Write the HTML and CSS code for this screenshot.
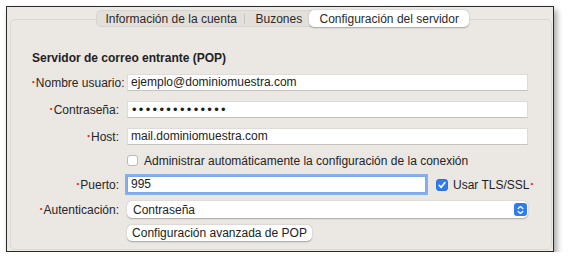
FILE: index.html
```html
<!DOCTYPE html>
<html lang="es">
<head>
<meta charset="utf-8">
<link rel="stylesheet" href="styles.css">
</head>
<body>
<div class="frame">
  <div class="tabs">
    <div class="tab">Información de la cuenta</div>
    <div class="sep"></div>
    <div class="tab tab-mid">Buzones</div>
    <div class="tab tab-sel">Configuración del servidor</div>
  </div>
  <div class="box">
    <div class="title">Servidor de correo entrante (POP)</div>
    <div class="form">
      <div class="row r1">
        <label class="lbl"><span class="req">•</span>Nombre usuario:</label>
        <div class="field">ejemplo@dominiomuestra.com</div>
      </div>
      <div class="row r2">
        <label class="lbl"><span class="req">•</span>Contraseña:</label>
        <div class="field pw">••••••••••••••</div>
      </div>
      <div class="row r2">
        <label class="lbl"><span class="req">•</span>Host:</label>
        <div class="field">mail.dominiomuestra.com</div>
      </div>
      <div class="row r4">
        <span class="lbl"></span>
        <div class="check-line"><span class="cb"></span><span>Administrar automáticamente la configuración de la conexión</span></div>
      </div>
      <div class="row r4">
        <label class="lbl"><span class="req">•</span>Puerto:</label>
        <div class="port-line">
          <div class="field port">995</div>
          <span class="cb cb-on"><svg viewBox="0 0 12 12" width="12" height="12"><path d="M2.6 6.3 L5 8.8 L9.6 3" fill="none" stroke="#fff" stroke-width="1.9" stroke-linecap="round" stroke-linejoin="round"/></svg></span>
          <span class="tls">Usar TLS/SSL<span class="req req-after">•</span></span>
        </div>
      </div>
      <div class="row r6">
        <label class="lbl"><span class="req">•</span>Autenticación:</label>
        <div class="popup"><span>Contraseña</span><span class="stepper"><svg viewBox="0 0 13 12" width="13" height="12"><path d="M4.2 4.6 L6.5 2.6 L8.8 4.6 M4.2 7.4 L6.5 9.4 L8.8 7.4" fill="none" stroke="#fff" stroke-width="1.3" stroke-linecap="round" stroke-linejoin="round"/></svg></span></div>
      </div>
      <div class="row r7">
        <span class="lbl"></span>
        <div><button class="btn">Configuración avanzada de POP</button></div>
      </div>
    </div>
  </div>
</div>
</body>
</html>
```
FILE: styles.css
```css
* { box-sizing: border-box; }
html, body { margin: 0; padding: 0; background: #fff; }
body {
  font-family: "Liberation Sans", Arial, sans-serif;
  font-size: 12px;
  color: #242424;
  padding: 6px 0 0 6px;
}
.frame {
  width: 548px;
  height: 246px;
  border: 1px solid #2a2a2a;
  background: #ece8e4;
  padding: 3px 1px 1px 3px;
  box-shadow: 3px 4px 6px rgba(0,0,0,0.35);
}
.tabs {
  position: relative;
  z-index: 1;
  display: flex;
  align-items: center;
  width: 373px;
  height: 17px;
  margin: 0 auto -8px auto;
  background: #e3dfdb;
  border: 1px solid #d8d4d0;
  border-radius: 5px;
  transform: translateX(1px);
}
.tab {
  height: 100%;
  display: flex;
  align-items: center;
  padding: 0 9px;
  color: #2a2a2a;
  white-space: nowrap;
}
.tab:first-child { padding-left: 9px; width: 147px; }
.sep { width: 1px; height: 10px; background: #c8c4c0; }
.tab-mid { padding-left: 11px; width: 64px; }
.tab-sel {
  flex: 1;
  height: 17px;
  margin: -1px -1px -1px 0;
  background: #fff;
  border-radius: 5px;
  box-shadow: 0 0.5px 1.5px rgba(0,0,0,0.3);
  padding-left: 11px;
}
.box {
  width: 542px;
  height: 231px;
  background: #ebe7e3;
  border: 1px solid #dcd8d4;
  border-radius: 5px;
  padding: 31px 23px 0 21px;
}
.title {
  font-weight: bold;
  line-height: 15px;
  height: 15px;
  color: #222;
}
.form { display: flex; flex-direction: column; }
.row {
  display: grid;
  grid-template-columns: 87px 1fr;
  column-gap: 8px;
  align-items: center;
  height: 17px;
}
.r1 { margin-top: 8px; }
.r2 { margin-top: 10px; }
.r4 { margin-top: 7px; }
.r6 { margin-top: 8px; }
.r7 { margin-top: 7px; height: 16px; }
.lbl {
  text-align: right;
  white-space: nowrap;
  color: #262626;
}
.req {
  color: #e0261c;
  font-size: 8px;
  position: relative;
  top: -3px;
  margin-right: 1px;
}
.req-after { margin-left: 1px; margin-right: 0; }
.field {
  height: 17px;
  background: #fff;
  border: 1px solid #dedbd8;
  border-bottom-color: #c6c2be;
  padding: 0 3px;
  line-height: 15px;
  color: #222;
  white-space: nowrap;
}
.pw { letter-spacing: 2.3px; font-size: 13px; padding-left: 4px; color: #1e1e1e; }
.check-line { display: flex; align-items: center; gap: 6px; }
.cb {
  width: 11px;
  height: 11px;
  border-radius: 3px;
  background: #fff;
  border: 1px solid #bdb9b5;
  display: inline-flex;
  align-items: center;
  justify-content: center;
  flex: none;
}
.cb-on {
  width: 12px;
  height: 12px;
  background: #2f7cf2;
  border-color: #2a70de;
  margin-left: 10px;
}
.port-line { display: flex; align-items: center; }
.port {
  width: 299px;
  border-color: #7fa9e6;
  box-shadow: 0 0 0 2px #86b0ec;
}
.tls { margin-left: 5px; white-space: nowrap; color: #1e1e1e; }
.popup {
  height: 17px;
  background: #fff;
  border-radius: 5px;
  box-shadow: 0 0.5px 1.5px rgba(0,0,0,0.28);
  display: flex;
  align-items: center;
  justify-content: space-between;
  padding: 0 1px 0 6px;
}
.stepper {
  width: 13px;
  height: 13px;
  border-radius: 3px;
  background: #2f7cf2;
  display: inline-flex;
  align-items: center;
  justify-content: center;
}
.btn {
  font: inherit;
  color: #222;
  height: 16px;
  width: 185px;
  padding: 0;
  background: #fff;
  border: none;
  border-radius: 5px;
  box-shadow: 0 0.5px 1.5px rgba(0,0,0,0.3);
  text-align: center;
}
```
